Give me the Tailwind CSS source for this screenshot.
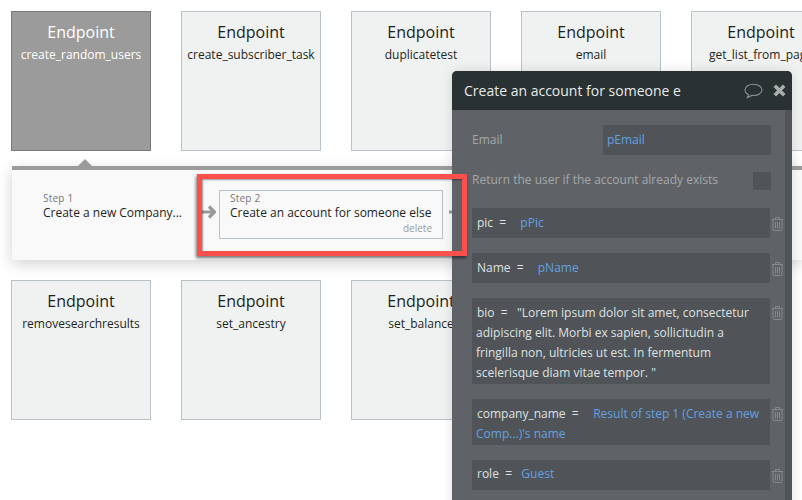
<!DOCTYPE html>
<html lang="en">
<head>
<meta charset="UTF-8">
<title>Endpoints</title>
<script src="https://cdn.jsdelivr.net/npm/@tailwindcss/browser@4"></script>
</head>
<body class="bg-white">
<div class="relative w-[802px] h-[500px] overflow-hidden bg-white font-['Open_Sans',sans-serif] pt-[11px]">

  <!-- top row -->
  <div class="flex gap-[30px] pl-[11px] w-[1000px]">
    <div class="w-[140px] h-[140px] shrink-0 bg-[#9b9b9b] border border-[#7a7a7a] text-center text-white">
      <div class="text-[16px] leading-[22px] mt-[9px]">Endpoint</div>
      <div class="text-[12px] leading-[18px] mt-[3px] whitespace-nowrap">create_random_users</div>
    </div>
    <div class="w-[140px] h-[140px] shrink-0 bg-[#f0f2f2] border border-[#b8c2c8] text-center text-[#1d1f20]">
      <div class="text-[16px] leading-[22px] mt-[9px]">Endpoint</div>
      <div class="text-[12px] leading-[18px] mt-[3px] whitespace-nowrap">create_subscriber_task</div>
    </div>
    <div class="w-[140px] h-[140px] shrink-0 bg-[#f0f2f2] border border-[#b8c2c8] text-center text-[#1d1f20]">
      <div class="text-[16px] leading-[22px] mt-[9px]">Endpoint</div>
      <div class="text-[12px] leading-[18px] mt-[3px] whitespace-nowrap">duplicatetest</div>
    </div>
    <div class="w-[140px] h-[140px] shrink-0 bg-[#f0f2f2] border border-[#b8c2c8] text-center text-[#1d1f20]">
      <div class="text-[16px] leading-[22px] mt-[9px]">Endpoint</div>
      <div class="text-[12px] leading-[18px] mt-[3px] whitespace-nowrap">email</div>
    </div>
    <div class="w-[140px] h-[140px] shrink-0 bg-[#f0f2f2] border border-[#b8c2c8] text-center text-[#1d1f20]">
      <div class="text-[16px] leading-[22px] mt-[9px]">Endpoint</div>
      <div class="text-[12px] leading-[18px] mt-[3px] whitespace-nowrap">get_list_from_page</div>
    </div>
  </div>

  <!-- workflow steps -->
  <div class="relative ml-[12px] mt-[15px] h-[94px] bg-[#f9f9f9] border-t-4 border-[#9b9b9b] shadow-[0_4px_14px_rgba(0,0,0,0.18)] flex items-start">
    <div class="absolute left-[66px] top-[-11px] w-0 h-0 border-x-[7px] border-x-transparent border-b-[7px] border-b-[#9b9b9b]"></div>
    <div class="w-[171px] ml-[31px] mt-[20px] shrink-0">
      <div class="text-[10px] leading-[16px] tracking-[0.2px] text-[#777]">Step 1</div>
      <div class="text-[12px] leading-[18px] -mt-[2px] text-[#1d1f20] whitespace-nowrap">Create a new Company...</div>
    </div>
    <svg class="w-[14px] h-[14px] mt-[35px] shrink-0 -ml-[12px]" viewBox="0 0 14 14" fill="none" stroke="#999" stroke-width="3.2"><path d="M0 7H12M7 1.500L12.500 7L7 12.500"/></svg>
    <div class="w-[224px] h-[49px] ml-[3px] mt-[20px] shrink-0 border border-[#b8c2c8] px-[10px] relative">
      <div class="text-[10px] leading-[16px] tracking-[0.2px] -mt-[1px] text-[#777]">Step 2</div>
      <div class="text-[12px] leading-[18px] -mt-[2px] text-[#1d1f20] whitespace-nowrap">Create an account for someone else</div>
      <div class="absolute right-[10px] bottom-[3px] text-[10px] leading-[14px] text-[#999]">delete</div>
    </div>
    <svg class="w-[14px] h-[14px] mt-[35px] shrink-0 ml-[6px]" viewBox="0 0 14 14" fill="none" stroke="#999" stroke-width="3.2"><path d="M0 7H12M7 1.500L12.500 7L7 12.500"/></svg>
  </div>

  <!-- second row -->
  <div class="flex gap-[30px] pl-[11px] mt-[20px] w-[1000px]">
    <div class="w-[140px] h-[140px] shrink-0 bg-[#f0f2f2] border border-[#b8c2c8] text-center text-[#1d1f20]">
      <div class="text-[16px] leading-[22px] mt-[9px]">Endpoint</div>
      <div class="text-[12px] leading-[18px] mt-[3px] whitespace-nowrap">removesearchresults</div>
    </div>
    <div class="w-[140px] h-[140px] shrink-0 bg-[#f0f2f2] border border-[#b8c2c8] text-center text-[#1d1f20]">
      <div class="text-[16px] leading-[22px] mt-[9px]">Endpoint</div>
      <div class="text-[12px] leading-[18px] mt-[3px] whitespace-nowrap">set_ancestry</div>
    </div>
    <div class="w-[140px] h-[140px] shrink-0 bg-[#f0f2f2] border border-[#b8c2c8] text-center text-[#1d1f20]">
      <div class="text-[16px] leading-[22px] mt-[9px]">Endpoint</div>
      <div class="text-[12px] leading-[18px] mt-[3px] whitespace-nowrap">set_balance</div>
    </div>
  </div>

  <!-- property editor window -->
  <div class="absolute left-[452px] top-[71px] w-[340px] h-[460px] rounded-t-[5px] overflow-hidden bg-[#5f6367] shadow-[0_0_12px_rgba(0,0,0,0.12)]">
    <div class="h-[39px] bg-[#293132] flex items-center pl-[12px] pr-[6px] text-[14px] text-[#e8eaea]">
      <span class="whitespace-nowrap">Create an account for someone e</span>
      <svg class="ml-auto w-[19px] h-[16px]" viewBox="0 0 19 16" fill="none" stroke="#8b9192" stroke-width="1.1"><path d="M9.5 1.2C5 1.2 1 3.5 1 7c0 2.2 1.6 3.8 3.6 4.600L3.4 14.600l4.400-2.200c.6.1 1.100.1 1.700.1 4.500 0 8.500-2.300 8.500-5.600S14 1.200 9.500 1.200z"/></svg>
      <svg class="ml-[10px] w-[13px] h-[13px]" viewBox="0 0 13 13" fill="none" stroke="#a9adae" stroke-width="3.6"><path d="M1.800 1.800L11.200 11.200M11.200 1.800L1.800 11.200"/></svg>
    </div>
    <div class="flex h-full">
      <div class="w-[333px] shrink-0 pl-[20px] pt-[15px] text-[12px] leading-[20px] text-[#dfe1e1]">
        <div class="flex items-center h-[30px]">
          <div class="w-[131px] text-[#a3a7a9]">Email</div>
          <div class="w-[168px] h-[30px] bg-[#505458] pl-[4px] leading-[30px] text-[#64a0e0]">pEmail</div>
        </div>
        <div class="flex items-start h-[18px] mt-[17px]">
          <div class="w-[281px] leading-[16px] text-[#a3a7a9] whitespace-nowrap">Return the user if the account already exists</div>
          <div class="w-[18px] h-[18px] bg-[#505458]"></div>
        </div>

        <div class="flex mt-[18px]">
          <div class="w-[298px] h-[30px] bg-[#505458] pl-[5px] leading-[30px] whitespace-pre">pic  = <span class="ml-[11px] text-[#64a0e0]">pPic</span></div>
          <svg class="ml-[1px] mt-[8px] w-[13px] h-[15px]" viewBox="0 0 13 15" fill="none" stroke="#84888b"><path d="M1 3.5H12M4.500 3.5V1.500H8.500V3.500M2 3.500V13.500C2 14 2.500 14.500 3 14.500H10C10.500 14.500 11 14 11 13.500V3.500M4.500 6V12.500M6.500 6V12.500M8.500 6V12.500"/></svg>
        </div>
        <div class="flex mt-[15px]">
          <div class="w-[298px] h-[30px] bg-[#505458] pl-[5px] leading-[30px] whitespace-pre">Name  = <span class="ml-[11px] text-[#64a0e0]">pName</span></div>
          <svg class="ml-[1px] mt-[8px] w-[13px] h-[15px]" viewBox="0 0 13 15" fill="none" stroke="#84888b"><path d="M1 3.5H12M4.500 3.5V1.500H8.500V3.500M2 3.500V13.500C2 14 2.500 14.500 3 14.500H10C10.500 14.500 11 14 11 13.500V3.500M4.500 6V12.500M6.500 6V12.500M8.500 6V12.500"/></svg>
        </div>
        <div class="flex mt-[15px]">
          <div class="w-[298px] h-[86px] bg-[#505458] pl-[4px] pr-[8px] pt-[5px]"><span class="pl-[1px] pr-[3px] whitespace-pre">bio  =  </span>"Lorem ipsum dolor sit amet, consectetur adipiscing elit. Morbi ex sapien, sollicitudin a fringilla non, ultricies ut est. In fermentum scelerisque diam vitae tempor. "</div>
          <svg class="ml-[1px] mt-[7px] w-[13px] h-[15px]" viewBox="0 0 13 15" fill="none" stroke="#84888b"><path d="M1 3.5H12M4.500 3.5V1.500H8.500V3.500M2 3.500V13.500C2 14 2.500 14.500 3 14.500H10C10.500 14.500 11 14 11 13.500V3.500M4.500 6V12.500M6.500 6V12.500M8.500 6V12.500"/></svg>
        </div>
        <div class="flex mt-[15px]">
          <div class="w-[298px] h-[46px] bg-[#505458] pl-[4px] pr-[8px] pt-[5px]"><span class="pl-[1px] pr-[2px] whitespace-pre">company_name  =    </span><span class="text-[#64a0e0]">Result of step 1 (Create a new Comp...)'s name</span></div>
          <svg class="ml-[1px] mt-[7px] w-[13px] h-[15px]" viewBox="0 0 13 15" fill="none" stroke="#84888b"><path d="M1 3.5H12M4.500 3.5V1.500H8.500V3.500M2 3.500V13.500C2 14 2.500 14.500 3 14.500H10C10.500 14.500 11 14 11 13.500V3.500M4.500 6V12.500M6.500 6V12.500M8.500 6V12.500"/></svg>
        </div>
        <div class="flex mt-[15px]">
          <div class="w-[298px] h-[30px] bg-[#505458] pl-[5px] leading-[26px] pt-[1px] whitespace-pre">role  =   <span class="text-[#64a0e0]">Guest</span></div>
          <svg class="ml-[1px] mt-[8px] w-[13px] h-[15px]" viewBox="0 0 13 15" fill="none" stroke="#84888b"><path d="M1 3.5H12M4.500 3.5V1.500H8.500V3.500M2 3.500V13.500C2 14 2.500 14.500 3 14.500H10C10.500 14.500 11 14 11 13.500V3.500M4.500 6V12.500M6.500 6V12.500M8.500 6V12.500"/></svg>
        </div>
      </div>
      <div class="w-[7px] bg-[#505458]"></div>
    </div>
  </div>

  <!-- red highlight annotation -->
  <div class="absolute left-[197px] top-[174px] w-[270px] h-[82px] border-[5px] border-[#fb504b] shadow-[-1px_2px_3px_rgba(0,0,0,0.55),inset_1px_1px_2px_rgba(0,0,0,0.4)]"></div>
</div>
</body>
</html>
